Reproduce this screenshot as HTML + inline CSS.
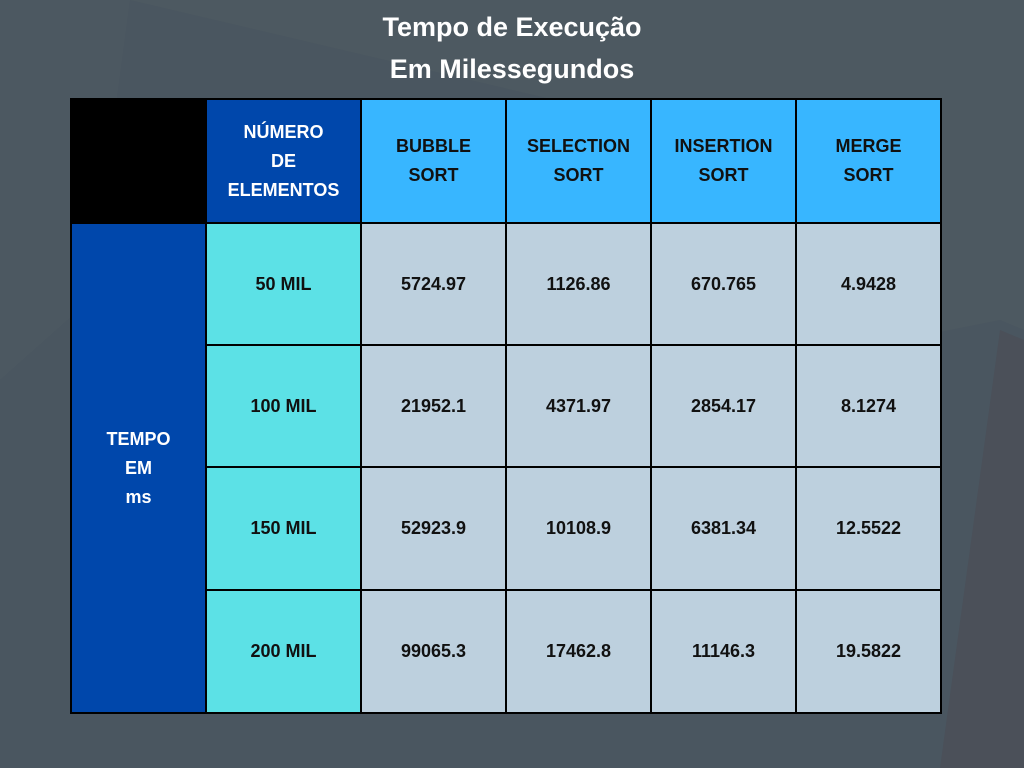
<!DOCTYPE html>
<html><head><meta charset="utf-8"><style>
body{margin:0;width:1024px;height:768px;overflow:hidden;background:#4a5660;font-family:"Liberation Sans",sans-serif;position:relative}
.t{position:absolute;left:0;width:1024px;text-align:center;color:#fff;font-weight:bold;font-size:27px}
.c{position:absolute;box-sizing:border-box;display:flex;align-items:center;justify-content:center;text-align:center;font-weight:bold;font-size:18px;line-height:29px;color:#111}
</style></head><body>
<svg style="position:absolute;left:0;top:0" width="1024" height="768">
<polygon points="130,0 1024,0 1024,330 1000,320 900,340 640,120" fill="#4d5961"/>
<polygon points="1000,330 1024,340 1024,768 940,768" fill="#4b5059"/>
<polygon points="0,0 130,0 90,300 0,380" fill="#4c5861"/>
</svg>
<div class="t" style="top:12px">Tempo de Execução</div>
<div class="t" style="top:54px">Em Milessegundos</div>
<div style="position:absolute;left:70px;top:98px;width:872px;height:616px;background:#000"></div>
<div id="g"></div>
<script>
var xs=[70,205,360,505,650,795,940],ys=[98,222,344,466,589,712];
var h=["","NÚMERO<br>DE<br>ELEMENTOS","BUBBLE<br>SORT","SELECTION<br>SORT","INSERTION<br>SORT","MERGE<br>SORT"];
var rows=[["50 MIL","5724.97","1126.86","670.765","4.9428"],["100 MIL","21952.1","4371.97","2854.17","8.1274"],["150 MIL","52923.9","10108.9","6381.34","12.5522"],["200 MIL","99065.3","17462.8","11146.3","19.5822"]];
var s="";
function cell(x0,y0,x1,y1,bg,col,txt){s+='<div class="c" style="left:'+(x0+2)+'px;top:'+(y0+2)+'px;width:'+(x1-x0-2)+'px;height:'+(y1-y0-2)+'px;background:'+bg+';color:'+col+'">'+txt+'</div>';}
for(var i=1;i<6;i++)cell(xs[i],ys[0],xs[i+1],ys[1],i==1?"#0047ab":"#38b6ff",i==1?"#fff":"#111",h[i]);
cell(xs[0],ys[1],xs[1],ys[5],"#0047ab","#fff","TEMPO<br>EM<br>ms");
for(var r=0;r<4;r++)for(var j=0;j<5;j++)cell(xs[j+1],ys[r+1],xs[j+2],ys[r+2],j==0?"#5ce1e6":"#bdd0de","#111",rows[r][j]);
document.getElementById("g").innerHTML=s;
</script>
</body></html>
